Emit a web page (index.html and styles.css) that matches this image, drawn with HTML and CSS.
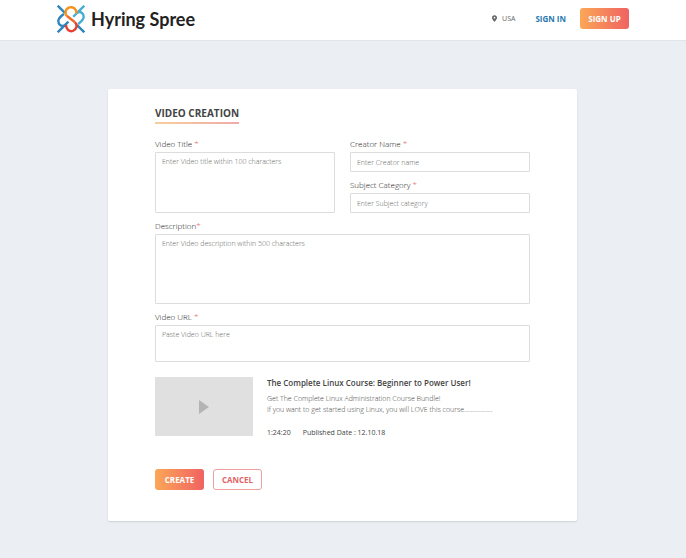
FILE: index.html
```
<!DOCTYPE html>
<html lang="en">
<head>
    <meta charset="UTF-8">
    <meta name="viewport" content="width=device-width, initial-scale=1.0">
    <title>Hyring Spree - Video Creation</title>
    <link rel="stylesheet" href="styles.css">
</head>
<body>
    <header class="header">
        <a class="brand" href="#">
            <svg class="logo" viewBox="0 0 81 81" fill="none" stroke-width="7">
                <path d="M2 2 L23 23" stroke="#2f86bd"/>
                <path d="M2 79 L33 48" stroke="#2f86bd"/>
                <path d="M47 34 L79 2" stroke="#45aed2"/>
                <path d="M58 58 L79 79" stroke="#2f86bd"/>
                <path d="M60 21 C70 18 78 26 77 36 C76 44 70 48 61 55" stroke="#45aed2"/>
                <path d="M21 60 C11 63 3 55 4 45 C5 37 11 33 20 26" stroke="#2f86bd"/>
                <path d="M57 24 C56 11 46 4 36 7 C24 11 21 24 29 32" stroke="#f6921e"/>
                <path d="M29 32 L52 50" stroke="#ee6b2d"/>
                <path d="M52 50 C60 58 57 71 46 75 C36 78 26 71 26 58" stroke="#e5402f"/>
            </svg>
            <span class="brand-name">Hyring Spree</span>
        </a>
        <nav class="nav">
            <span class="location">
                <svg class="pin" viewBox="0 0 12 16">
                    <path d="M6 0 A6 6 0 0 0 0 6 C0 10 6 16 6 16 C6 16 12 10 12 6 A6 6 0 0 0 6 0 Z M6 4 A2 2 0 1 1 6 8 A2 2 0 1 1 6 4 Z" fill="#666" fill-rule="evenodd"/>
                </svg>
                USA
            </span>
            <a class="sign-in" href="#">SIGN IN</a>
            <button class="button primary" type="button">SIGN UP</button>
        </nav>
    </header>

    <main class="card">
        <h1>VIDEO CREATION</h1>
        <form>
            <div class="columns">
                <div class="field">
                    <label for="title">Video Title <span class="required">*</span></label>
                    <textarea id="title" class="title-box" placeholder="Enter Video title within 100 characters"></textarea>
                </div>
                <div class="column">
                    <div class="field">
                        <label for="creator">Creator Name <span class="required">*</span></label>
                        <input id="creator" type="text" placeholder="Enter Creator name">
                    </div>
                    <div class="field">
                        <label for="category">Subject Category <span class="required">*</span></label>
                        <input id="category" type="text" placeholder="Enter Subject category">
                    </div>
                </div>
            </div>
            <div class="field">
                <label for="description">Description<span class="required">*</span></label>
                <textarea id="description" class="description-box" placeholder="Enter Video description within 500 characters"></textarea>
            </div>
            <div class="field">
                <label for="url">Video URL <span class="required">*</span></label>
                <textarea id="url" class="url-box" placeholder="Paste Video URL here"></textarea>
            </div>

            <div class="preview">
                <div class="thumbnail">
                    <svg class="play" viewBox="0 0 10 14"><path d="M0 0 L10 7 L0 14 Z" fill="#b4b4b4"/></svg>
                </div>
                <div class="details">
                    <h2>The Complete Linux Course: Beginner to Power User!</h2>
                    <p class="summary">Get The Complete Linux Administration Course Bundle!<br>If you want to get started using Linux, you will LOVE this course.................</p>
                    <p class="meta"><span>1:24:20</span><span>Published Date : 12.10.18</span></p>
                </div>
            </div>

            <div class="actions">
                <button class="button primary" type="submit">CREATE</button>
                <button class="button outline" type="button">CANCEL</button>
            </div>
        </form>
    </main>
</body>
</html>
```
FILE: styles.css
```
* {
    box-sizing: border-box;
}
body {
    margin: 0;
    min-height: 100vh;
    background-color: #ebeff4;
    font-family: "Open Sans", sans-serif;
    color: #444;
}
a {
    text-decoration: none;
}
.header {
    display: flex;
    justify-content: space-between;
    align-items: center;
    height: 41px;
    padding: 0 57px 3px;
    background-color: white;
    border-bottom: 1px solid #e2e5e8;
}
.brand {
    display: flex;
    align-items: center;
    gap: 6px;
}
.logo {
    width: 28px;
    height: 28px;
}
.brand-name {
    font-family: Lato, sans-serif;
    font-size: 18px;
    font-weight: 700;
    line-height: 24px;
    color: #222;
}
.nav {
    display: flex;
    align-items: center;
}
.location {
    display: flex;
    align-items: center;
    gap: 5px;
    margin-right: 20px;
    font-size: 7px;
    color: #666;
}
.pin {
    width: 5px;
    height: 7px;
}
.sign-in {
    margin-right: 14px;
    font-size: 8px;
    font-weight: 700;
    color: #2a7ab0;
}
.button {
    width: 49px;
    height: 21px;
    padding: 0;
    border: none;
    border-radius: 3px;
    font-family: inherit;
    font-size: 8px;
    font-weight: 700;
    cursor: pointer;
}
.primary {
    background: linear-gradient(to right, #fba757, #f06262);
    color: white;
}
.outline {
    background-color: white;
    border: 1px solid #eda0a0;
    color: #e06468;
}
.card {
    margin: 48px 109px 37px 108px;
    padding: 17px 47px 31px;
    background-color: white;
    border-radius: 2px;
    box-shadow: 0 1px 2px rgba(0, 0, 0, 0.12);
}
h1 {
    width: fit-content;
    margin: 0 0 14px;
    padding-bottom: 2px;
    border-bottom: 2px solid;
    border-image: linear-gradient(to right, #f7cf9c, #f0aaaa) 1;
    font-size: 10px;
    font-weight: 700;
    line-height: 14px;
}
.columns {
    display: grid;
    grid-template-columns: 1fr 1fr;
    gap: 15px;
}
.field {
    display: flex;
    flex-direction: column;
    margin-bottom: 7px;
}
label {
    margin-bottom: 2px;
    font-size: 8px;
    font-weight: 300;
    line-height: 12px;
    color: #222;
}
.required {
    color: #e0444c;
}
input,
textarea {
    width: 100%;
    height: 20px;
    padding: 0 6px;
    border: 1px solid #dcdcdc;
    border-radius: 1px;
    background-color: white;
    font-family: inherit;
    font-size: 7px;
    font-weight: 300;
    line-height: 10px;
    resize: none;
}
textarea {
    padding: 4px 6px;
}
::placeholder {
    color: #666;
}
.title-box {
    height: 61px;
}
.description-box {
    height: 70px;
}
.url-box {
    height: 37px;
}
.preview {
    display: flex;
    gap: 14px;
    margin-top: 15px;
}
.thumbnail {
    display: flex;
    align-items: center;
    justify-content: center;
    width: 98px;
    height: 59px;
    background-color: #e0e0e0;
}
.play {
    width: 10px;
    height: 14px;
}
h2 {
    margin: 0 0 5px;
    font-size: 8px;
    font-weight: 600;
    line-height: 11px;
}
.summary {
    margin: 0 0 13px;
    font-size: 7px;
    font-weight: 300;
    line-height: 11px;
}
.meta {
    display: flex;
    gap: 12px;
    margin: 0;
    font-size: 7px;
    line-height: 10px;
}
.actions {
    display: flex;
    gap: 9px;
    margin-top: 31px;
}
```
